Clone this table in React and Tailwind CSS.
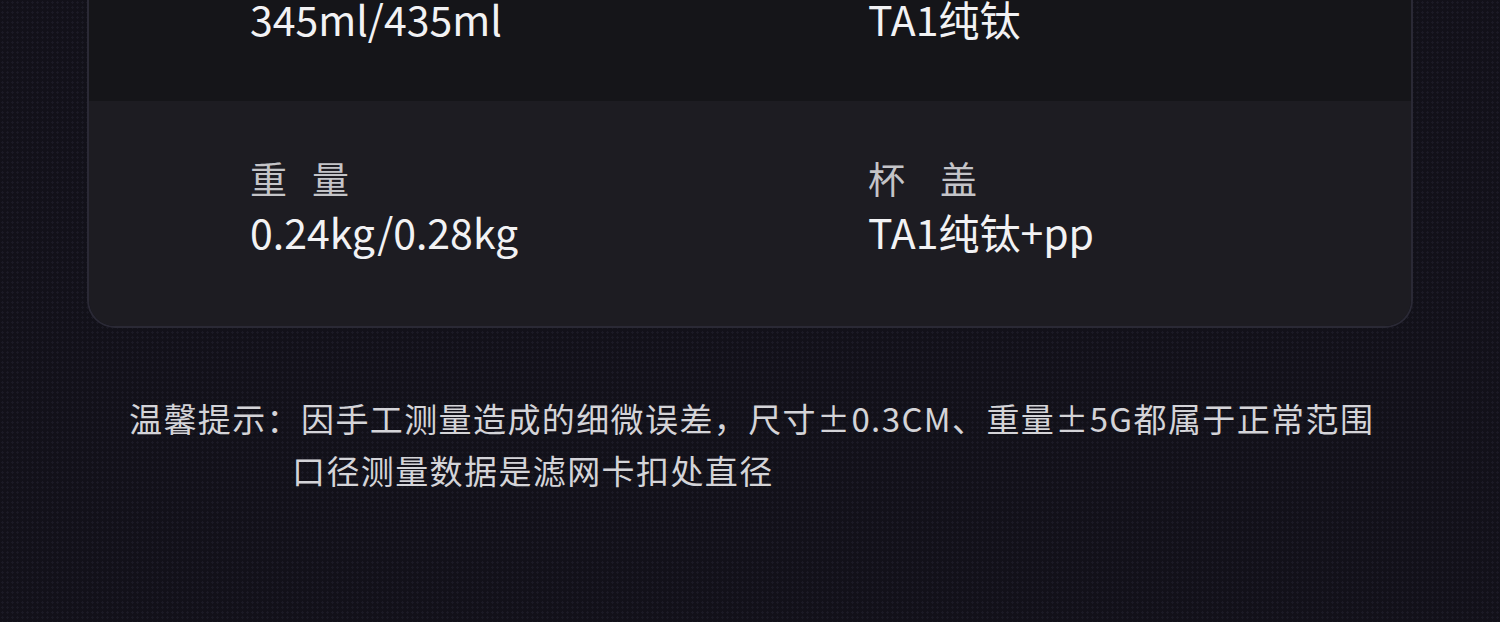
import React from "react";

const Label = ({ first, second, gap }) => (
    <p className="flex text-[37px] leading-[48px] text-[#c4c4c8]">
        <span>{first}</span>
        <span className={gap}>{second}</span>
    </p>
);

const Value = ({ children, top }) => (
    <p className={`text-[41px] text-[#f2f2f4] ${top ? "leading-[36px]" : "leading-[58px]"}`}>{children}</p>
);

const App = () => {
    return (
        <div className="w-[1500px] h-[622px] overflow-hidden bg-[#121119] bg-[radial-gradient(#1b1a25_1.2px,transparent_1.3px)] bg-[size:5px_5px] font-['Noto_Sans_CJK_SC','Noto_Sans',sans-serif]">
            <div className="px-[87px]">
                <div className="rounded-b-[28px] border-2 border-t-0 border-[#2a2935] overflow-hidden">
                    <div className="bg-[#151519] h-[101px] grid grid-cols-[618px_1fr] items-start pl-[161px]">
                        <Value top>345ml/435ml</Value>
                        <Value top>TA1纯钛</Value>
                    </div>
                    <div className="bg-[#1d1c22] h-[225px] grid grid-cols-[618px_1fr] pl-[161px] pt-[53px]">
                        <div>
                            <Label first="重" second="量" gap="ml-[25px]" />
                            <Value>0.24kg/0.28kg</Value>
                        </div>
                        <div>
                            <Label first="杯" second="盖" gap="ml-[35px]" />
                            <Value>TA1纯钛+pp</Value>
                        </div>
                    </div>
                </div>
            </div>

            <div className="mt-[64px] pl-[129px] text-[33px] leading-[52px] text-[#d4d4d8] tracking-[1.4px]">
                <p>温馨提示：因手工测量造成的细微误差，尺寸±0.3CM、重量±5G都属于正常范围</p>
                <p className="pl-[163px]">口径测量数据是滤网卡扣处直径</p>
            </div>
        </div>
    );
};

export default App;
